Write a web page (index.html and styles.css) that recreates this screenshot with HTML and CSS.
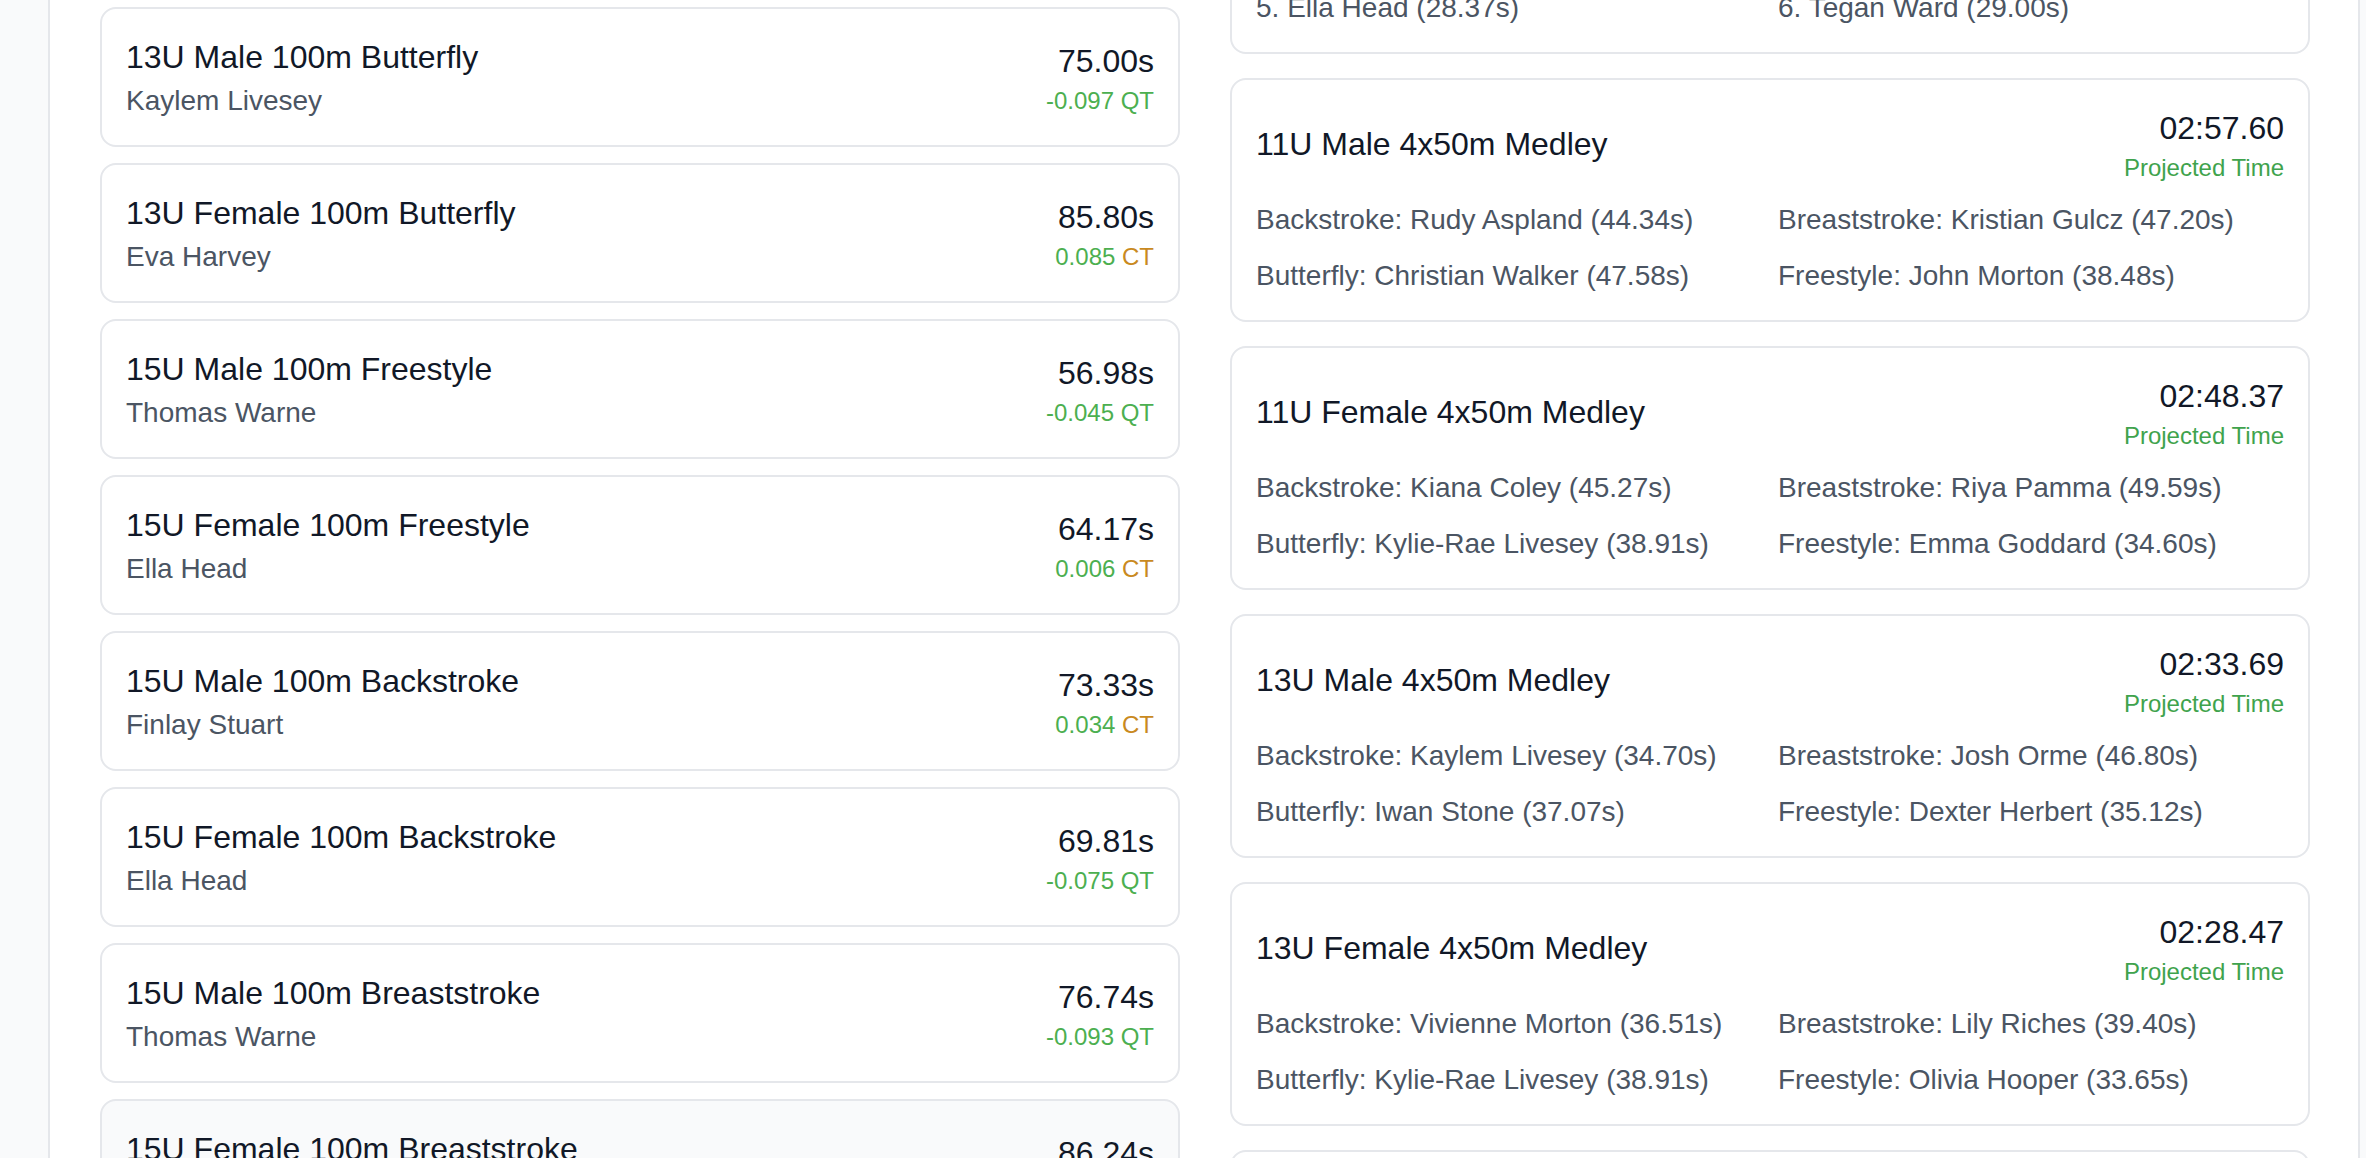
FILE: index.html
```html
<!DOCTYPE html>
<html lang="en">
<head>
<meta charset="utf-8">
<title>Projected Times</title>
<link rel="stylesheet" href="styles.css">
</head>
<body>
<div class="page">
  <div class="panel">
    <div class="grid">
      <section class="col">
        <div class="list list-events">
          <div class="event">
            <div class="ev-main"><div class="ev-title">13U Male 100m Butterfly</div><div class="ev-name">Kaylem Livesey</div></div>
            <div class="ev-side"><div class="ev-time">75.00s</div><div class="ev-delta"><span class="num">-0.097</span> <span class="qt">QT</span></div></div>
          </div>
          <div class="event">
            <div class="ev-main"><div class="ev-title">13U Female 100m Butterfly</div><div class="ev-name">Eva Harvey</div></div>
            <div class="ev-side"><div class="ev-time">85.80s</div><div class="ev-delta"><span class="num">0.085</span> <span class="ct">CT</span></div></div>
          </div>
          <div class="event">
            <div class="ev-main"><div class="ev-title">15U Male 100m Freestyle</div><div class="ev-name">Thomas Warne</div></div>
            <div class="ev-side"><div class="ev-time">56.98s</div><div class="ev-delta"><span class="num">-0.045</span> <span class="qt">QT</span></div></div>
          </div>
          <div class="event">
            <div class="ev-main"><div class="ev-title">15U Female 100m Freestyle</div><div class="ev-name">Ella Head</div></div>
            <div class="ev-side"><div class="ev-time">64.17s</div><div class="ev-delta"><span class="num">0.006</span> <span class="ct">CT</span></div></div>
          </div>
          <div class="event">
            <div class="ev-main"><div class="ev-title">15U Male 100m Backstroke</div><div class="ev-name">Finlay Stuart</div></div>
            <div class="ev-side"><div class="ev-time">73.33s</div><div class="ev-delta"><span class="num">0.034</span> <span class="ct">CT</span></div></div>
          </div>
          <div class="event">
            <div class="ev-main"><div class="ev-title">15U Female 100m Backstroke</div><div class="ev-name">Ella Head</div></div>
            <div class="ev-side"><div class="ev-time">69.81s</div><div class="ev-delta"><span class="num">-0.075</span> <span class="qt">QT</span></div></div>
          </div>
          <div class="event">
            <div class="ev-main"><div class="ev-title">15U Male 100m Breaststroke</div><div class="ev-name">Thomas Warne</div></div>
            <div class="ev-side"><div class="ev-time">76.74s</div><div class="ev-delta"><span class="num">-0.093</span> <span class="qt">QT</span></div></div>
          </div>
          <div class="event event-hover">
            <div class="ev-main"><div class="ev-title">15U Female 100m Breaststroke</div></div>
            <div class="ev-side"><div class="ev-time">86.24s</div></div>
          </div>
        </div>
      </section>

      <section class="col">
        <div class="list list-relays">
          <div class="relay relay-tail">
            <div class="legs legs-tail">
              <div>5. Ella Head (28.37s)</div><div>6. Tegan Ward (29.00s)</div>
            </div>
          </div>
          <div class="relay">
            <div class="relay-head">
              <div class="ev-title">11U Male 4x50m Medley</div>
              <div class="ev-side"><div class="ev-time">02:57.60</div><div class="proj">Projected Time</div></div>
            </div>
            <div class="legs">
              <div>Backstroke: Rudy Aspland (44.34s)</div><div>Breaststroke: Kristian Gulcz (47.20s)</div>
              <div>Butterfly: Christian Walker (47.58s)</div><div>Freestyle: John Morton (38.48s)</div>
            </div>
          </div>
          <div class="relay">
            <div class="relay-head">
              <div class="ev-title">11U Female 4x50m Medley</div>
              <div class="ev-side"><div class="ev-time">02:48.37</div><div class="proj">Projected Time</div></div>
            </div>
            <div class="legs">
              <div>Backstroke: Kiana Coley (45.27s)</div><div>Breaststroke: Riya Pamma (49.59s)</div>
              <div>Butterfly: Kylie-Rae Livesey (38.91s)</div><div>Freestyle: Emma Goddard (34.60s)</div>
            </div>
          </div>
          <div class="relay">
            <div class="relay-head">
              <div class="ev-title">13U Male 4x50m Medley</div>
              <div class="ev-side"><div class="ev-time">02:33.69</div><div class="proj">Projected Time</div></div>
            </div>
            <div class="legs">
              <div>Backstroke: Kaylem Livesey (34.70s)</div><div>Breaststroke: Josh Orme (46.80s)</div>
              <div>Butterfly: Iwan Stone (37.07s)</div><div>Freestyle: Dexter Herbert (35.12s)</div>
            </div>
          </div>
          <div class="relay">
            <div class="relay-head">
              <div class="ev-title">13U Female 4x50m Medley</div>
              <div class="ev-side"><div class="ev-time">02:28.47</div><div class="proj">Projected Time</div></div>
            </div>
            <div class="legs">
              <div>Backstroke: Vivienne Morton (36.51s)</div><div>Breaststroke: Lily Riches (39.40s)</div>
              <div>Butterfly: Kylie-Rae Livesey (38.91s)</div><div>Freestyle: Olivia Hooper (33.65s)</div>
            </div>
          </div>
          <div class="relay relay-next"></div>
        </div>
      </section>
    </div>
  </div>
</div>
</body>
</html>
```

FILE: styles.css
```css
* { box-sizing: border-box; }

html, body {
  margin: 0;
  padding: 0;
  background: #f9fafb;
  font-family: "Liberation Sans", Arial, Helvetica, sans-serif;
  color: #111827;
}

.page {
  margin: 0 6px 0 48px;
}

.panel {
  background: #ffffff;
  border: 2px solid #e5e7eb;
  border-top: 0;
  padding: 7px 48px 48px 50px;
}

.grid {
  display: grid;
  grid-template-columns: 1fr 1fr;
  column-gap: 50px;
  align-items: start;
}

.list {
  display: flex;
  flex-direction: column;
}

.list-events { gap: 16px; }
.list-relays { gap: 24px; }

.event {
  display: flex;
  justify-content: space-between;
  align-items: center;
  background: #ffffff;
  border: 2px solid #e5e7eb;
  border-radius: 16px;
  padding: 24px;
}

.event-hover {
  background: #f9fafb;
  min-height: 140px;
  align-items: flex-start;
  padding-top: 24px;
}

.ev-title {
  font-size: 32px;
  line-height: 48px;
  color: #111827;
}

.ev-name {
  font-size: 28px;
  line-height: 40px;
  color: #4b5563;
}

.ev-side { text-align: right; }

.ev-time {
  font-size: 32px;
  line-height: 48px;
  color: #111827;
}

.event-hover .ev-side { padding-top: 4px; }

.ev-delta {
  font-size: 24px;
  line-height: 32px;
}

.num, .qt { color: #4caf50; }
.ct { color: #c98a1f; }

.relay {
  background: #ffffff;
  border: 2px solid #e5e7eb;
  border-radius: 16px;
  padding: 24px;
}

/* the card above is partly scrolled out of view */
.relay-tail {
  margin-top: -45px;
}

.relay-next {
  height: 244px;
}

.relay-head {
  display: flex;
  justify-content: space-between;
  align-items: center;
}

.proj {
  font-size: 24px;
  line-height: 32px;
  color: #3fa34d;
}

.legs {
  display: grid;
  grid-template-columns: 1fr 1fr;
  column-gap: 16px;
  row-gap: 16px;
  margin-top: 16px;
  font-size: 28px;
  line-height: 40px;
  color: #4b5563;
}

.legs-tail {
  margin-top: 0;
}
```
